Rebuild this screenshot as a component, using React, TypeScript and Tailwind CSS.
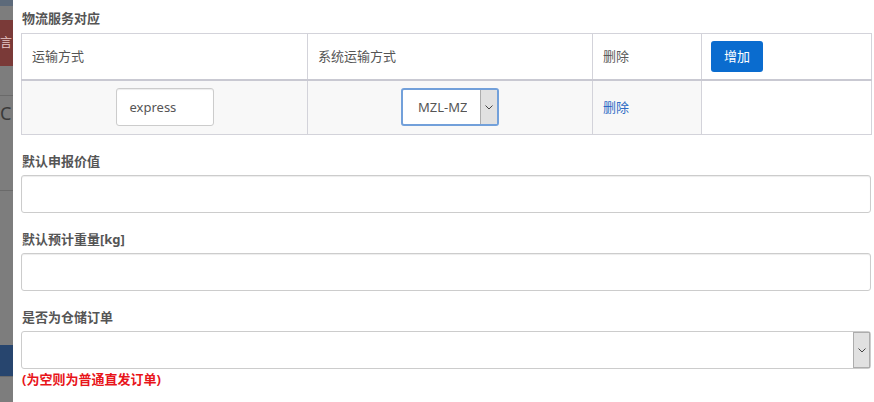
import React from "react";

const font = { fontFamily: '"Noto Sans", "Noto Sans CJK SC", sans-serif' };

const Chevron = () => (
  <svg width="8" height="5" viewBox="0 0 8 5" fill="none">
    <polyline points="0.5,0.5 4,4 7.5,0.5" stroke="#444" strokeWidth="1" />
  </svg>
);

const ArrowBox = ({ className }: { className: string }) => (
  <span
    className={`absolute flex items-center justify-center bg-[#e1e1e1] border-l border-[#adadad] ${className}`}
  >
    <Chevron />
  </span>
);

const FieldLabel = ({ text, className }: { text: string; className: string }) => (
  <div className={`text-[13px] leading-[20px] font-bold text-[#555] ${className}`}>{text}</div>
);

const BackdropStrip = () => (
  <div className="w-[13px] shrink-0 bg-[#7d7d7d] flex flex-col">
    <div className="h-[6px] bg-[#5d6a7a]" />
    <div className="h-[14px]" />
    <div className="h-[46px] bg-[#7a3a38] text-[12px] leading-[46px] text-[#e8c8c8] overflow-hidden">言</div>
    <div className="h-[30px] border-b border-[#6a6a6a]" />
    <div className="h-[35px] text-[#3a3a3a] text-[18px] leading-[35px] overflow-hidden">C</div>
    <div className="h-[60px] border-b border-[#6a6a6a]" />
    <div className="h-[154px]" />
    <div className="h-[31px] bg-[#27456e]" />
    <div className="flex-1 border-t border-[#6a6a6a]" />
  </div>
);

export default function App() {
  return (
    <div className="flex w-[874px] h-[402px] overflow-hidden bg-white" style={font}>
      <BackdropStrip />
      <div className="flex-1 bg-white pl-[8px] pr-[3px] pt-[8px]">
        <div className="text-[13px] leading-[20px] font-bold text-[#555] mb-[5px] pl-px">物流服务对应</div>

        <table className="w-[850px] table-fixed border-collapse text-[13px] text-[#555]">
          <colgroup>
            <col className="w-[286px]" />
            <col className="w-[285px]" />
            <col className="w-[109px]" />
            <col className="w-[170px]" />
          </colgroup>
          <thead>
            <tr className="h-[46px] bg-white">
              <th className="border border-[#d3d3da] border-b-2 border-b-[#c9c9d2] text-left font-normal text-[#555] pl-[10px]">运输方式</th>
              <th className="border border-[#d3d3da] border-b-2 border-b-[#c9c9d2] text-left font-normal text-[#555] pl-[10px]">系统运输方式</th>
              <th className="border border-[#d3d3da] border-b-2 border-b-[#c9c9d2] text-left font-normal text-[#5a5a5a] pl-[10px]">删除</th>
              <th className="border border-[#d3d3da] border-b-2 border-b-[#c9c9d2] text-left font-normal pl-[9px]">
                <button className="h-[31px] w-[52px] rounded-[3px] bg-[#0a6ccf] text-white text-[13px]">增加</button>
              </th>
            </tr>
          </thead>
          <tbody>
            <tr className="h-[55px]">
              <td className="border border-[#d3d3da] bg-[#f8f8f8] text-center">
                <div className="inline-flex items-center h-[38px] w-[98px] border border-[#ccc] rounded-[3px] bg-white pl-[13px] text-[13px] text-[#555] shadow-[inset_0_1px_1px_rgba(0,0,0,0.075)]">
                  express
                </div>
              </td>
              <td className="border border-[#d3d3da] bg-[#f8f8f8] text-center">
                <div className="relative inline-flex items-center h-[38px] w-[98px] border-2 border-[#72a0da] rounded-[3px] bg-white pl-[15px] text-[13px] text-[#555] overflow-hidden">
                  <span className="block w-[49px] overflow-hidden whitespace-nowrap text-left">MZL-MZL</span>
                  <ArrowBox className="right-0 top-0 bottom-0 w-[17px]" />
                </div>
              </td>
              <td className="border border-[#d3d3da] bg-[#f8f8f8] pl-[10px] text-[#2e6bc4]">删除</td>
              <td className="border border-[#d3d3da] bg-white" />
            </tr>
          </tbody>
        </table>

        <FieldLabel text="默认申报价值" className="mt-[16px] mb-[4px] pl-px" />
        <div className="h-[38px] w-[850px] border border-[#ccc] rounded-[3px] shadow-[inset_0_1px_1px_rgba(0,0,0,0.075)]" />

        <FieldLabel text="默认预计重量[kg]" className="mt-[16px] mb-[4px] pl-px" />
        <div className="h-[38px] w-[850px] border border-[#ccc] rounded-[3px] shadow-[inset_0_1px_1px_rgba(0,0,0,0.075)]" />

        <FieldLabel text="是否为仓储订单" className="mt-[16px] mb-[4px] pl-px" />
        <div className="relative h-[38px] w-[850px] border border-[#ccc] rounded-[3px]">
          <ArrowBox className="right-0 top-0 bottom-0 w-[17px] border border-[#adadad]" />
        </div>
        <div className="text-[13px] leading-[20px] font-bold text-[#e8141a] pl-px">(为空则为普通直发订单)</div>
      </div>
    </div>
  );
}
